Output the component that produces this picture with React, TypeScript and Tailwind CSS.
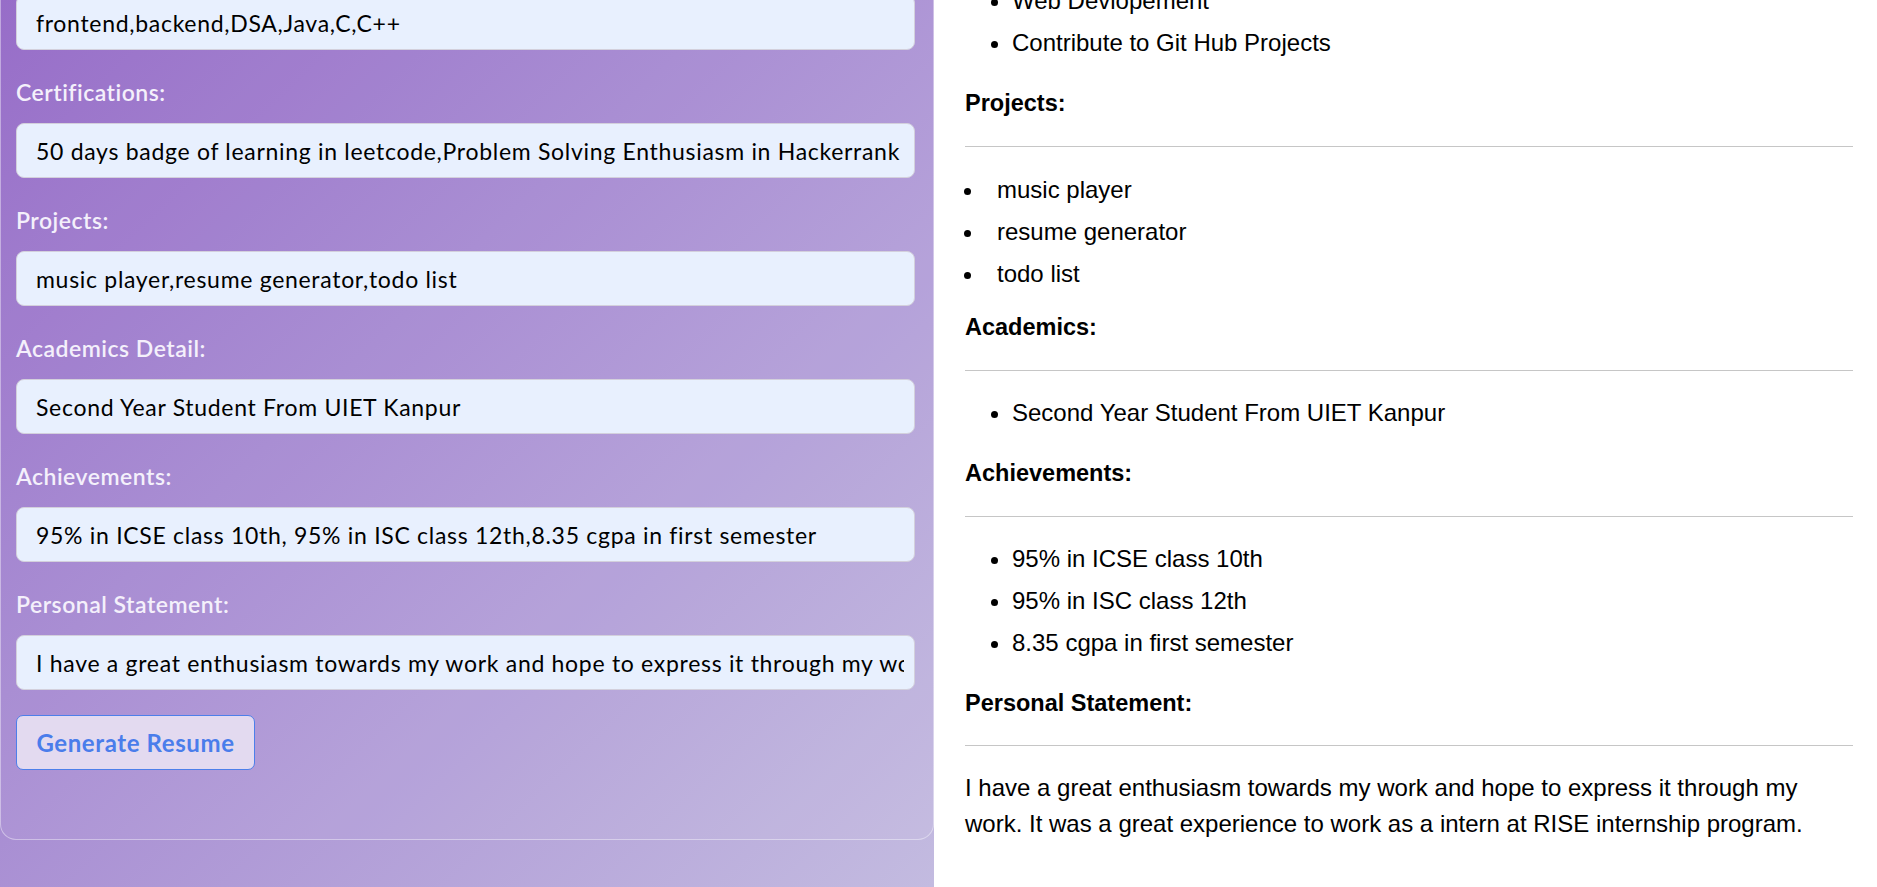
import React from 'react';

type Field = {
  label: string;
  value: string;
};

const fields: Field[] = [
  {
    label: 'Certifications:',
    value:
      '50 days badge of learning in leetcode,Problem Solving Enthusiasm in Hackerrank',
  },
  { label: 'Projects:', value: 'music player,resume generator,todo list' },
  { label: 'Academics Detail:', value: 'Second Year Student From UIET Kanpur' },
  {
    label: 'Achievements:',
    value: '95% in ICSE class 10th, 95% in ISC class 12th,8.35 cgpa in first semester',
  },
  {
    label: 'Personal Statement:',
    value:
      'I have a great enthusiasm towards my work and hope to express it through my work. It was a great experience to work as a intern at RISE internship program.',
  },
];

const inputClass =
  'block h-[55px] w-full rounded-[8px] border border-[#d3d0dc] bg-[#e8f0fe] pl-[19px] pr-[10px] text-[23px] tracking-[0.7px] text-black outline-none';

const App = () => {
  return (
    <div className="flex h-[887px] w-full overflow-hidden">
      <div className="w-[934px] shrink-0 bg-linear-to-br from-[#9266c6] to-[#c3bbe0] font-['Lato',sans-serif]">
        <div className="-mt-[40px] rounded-[16px] border border-white/40 bg-white/5 pt-[34px] pr-[18px] pb-[69px] pl-[15px]">
          <input className={inputClass} readOnly value="frontend,backend,DSA,Java,C,C++" />
          {fields.map((field) => (
            <div key={field.label}>
              <label className="mt-[30px] mb-[19px] block text-[23px] leading-[24px] font-semibold tracking-[0.5px] text-[#f4f0fb]">
                {field.label}
              </label>
              <input className={inputClass} readOnly value={field.value} />
            </div>
          ))}
          <button className="mt-[25px] h-[55px] w-[239px] rounded-[7px] border border-[#4d7fea] bg-[#e3daf0] text-[24px] font-bold tracking-[0.6px] text-[#4a7deb]">
            Generate Resume
          </button>
        </div>
      </div>

      <div className="flex-1 bg-white pr-[24px] pl-[31px] font-['Liberation_Sans',Arial,sans-serif] text-[24px] text-black">
        <ul className="-mt-[20px] list-disc pl-[47px] leading-[42px]">
          <li>Web Devlopement</li>
          <li>Contribute to Git Hub Projects</li>
        </ul>

        <h3 className="mt-[25px] text-[23.5px] leading-[28px] font-bold">Projects:</h3>
        <hr className="mt-[29px] border-[#c6c6c6]" />
        <ul className="mt-[22px] list-disc pl-[20px] leading-[42px]">
          <li className="pl-[12px]">music player</li>
          <li className="pl-[12px]">resume generator</li>
          <li className="pl-[12px]">todo list</li>
        </ul>

        <h3 className="mt-[18px] text-[23.5px] leading-[28px] font-bold">Academics:</h3>
        <hr className="mt-[29px] border-[#c6c6c6]" />
        <ul className="mt-[21px] list-disc pl-[47px] leading-[42px]">
          <li>Second Year Student From UIET Kanpur</li>
        </ul>

        <h3 className="mt-[25px] text-[23.5px] leading-[28px] font-bold">Achievements:</h3>
        <hr className="mt-[29px] border-[#c6c6c6]" />
        <ul className="mt-[21px] list-disc pl-[47px] leading-[42px]">
          <li>95% in ICSE class 10th</li>
          <li>95% in ISC class 12th</li>
          <li>8.35 cgpa in first semester</li>
        </ul>

        <h3 className="mt-[25px] text-[23.5px] leading-[28px] font-bold">
          Personal Statement:
        </h3>
        <hr className="mt-[28px] border-[#c6c6c6]" />
        <p className="mt-[24px] leading-[36px]">
          I have a great enthusiasm towards my work and hope to express it through my
          work. It was a great experience to work as a intern at RISE internship
          program.
        </p>
      </div>
    </div>
  );
};

export default App;
